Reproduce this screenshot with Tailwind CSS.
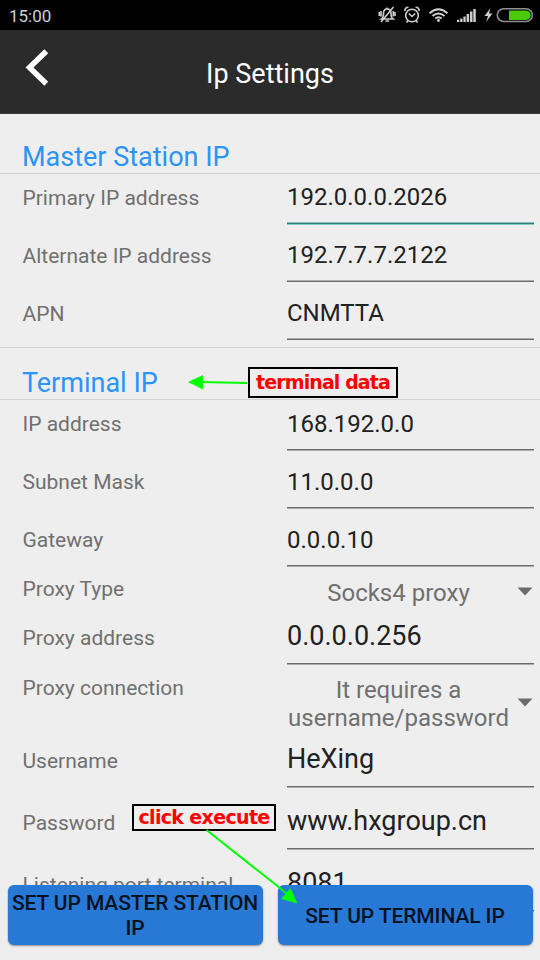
<!DOCTYPE html>
<html lang="en">
<head>
<meta charset="utf-8">
<title>Ip Settings</title>
<script src="https://cdn.jsdelivr.net/npm/@tailwindcss/browser@4"></script>
</head>
<body class="bg-[#eeeeee]">
<div class="relative w-[540px] h-[960px] overflow-hidden bg-[#eeeeee] font-[Roboto,sans-serif] text-[#212121]">
  <!-- status bar -->
  <div class="h-[30px] bg-black flex items-center justify-between pl-[9px] pr-[6px] text-[#cfcfcf]">
    <span class="text-[17px] leading-[30px] pt-[1px]">15:00</span>
    <svg class="w-[162px] h-[30px]" viewBox="372 0 162 30" fill="none" stroke="#cfcfcf" stroke-width="1.6">
      <path d="M381.500 19c1.500-1 2-3 2-5.500 0-3 1.200-4.500 3.500-4.500s4 1.500 4 4.500c0 2.500 .5 4.500 2 5.500z"/>
      <path d="M387 7.500v1.500M385.500 21h3.500M379.300 12v4M381 11v5.500M395 12v4M393.300 11v5.500M393.500 7L381 22"/>
      <circle cx="412" cy="15.500" r="6.300"/>
      <path d="M408.800 13.500l3.200 3 3.200-3M404.800 11c0-2 1.500-3.700 3.700-3.700M419.200 11c0-2-1.500-3.700-3.700-3.700M408 20.500l-1.500 2M416 20.500l1.500 2"/>
      <path d="M429.500 13.200q9-8 18 0M432.500 16q6-5.200 12 0M435.300 18.500q3.200-2.600 6.400 0" stroke-width="1.900"/>
      <circle cx="438.500" cy="20.500" r="1.400" fill="#cfcfcf" stroke="none"/>
      <path d="M457 22v-2.300h2.300V22zM460.200 22v-3.500h2.300V22zM463.400 22v-5.500h2.300V22zM466.600 22v-8h2.500V22zM470 22V11.500h2.500V22zM473.300 22V9h2.500V22z" fill="#cfcfcf" stroke="none"/>
      <path d="M490.500 8l-6 8h3.500l-2 6 6.500-8.500H489z" fill="#cfcfcf" stroke="none"/>
      <rect x="497.300" y="8.800" width="35" height="12.700" rx="6.300" stroke="#8f8f8f"/>
      <path d="M509 10.500h17a4.700 4.700 0 0 1 0 9.400h-17z" fill="#4bc80a" stroke="none"/>
    </svg>
  </div>
  <!-- title bar -->
  <div class="relative h-[84px] bg-[#2b2b2b] border-b border-[#3c3c3c] flex items-center justify-center text-white text-[27px] leading-[32px] pt-[4px]">
    <svg class="absolute left-[24px] top-[18px] w-[28px] h-[40px]" viewBox="0 0 28 40" fill="none" stroke="#fff" stroke-width="5.500"><path d="M22.300 3.300L5.500 19.500L22.300 35.700"/></svg>
    Ip Settings
  </div>

  <!-- master station -->
  <div class="h-[60px] border-b border-[#d2d2d2] pl-[22px] pt-[28px] text-[27px] leading-[30px] text-[#2b95f7]">Master Station IP</div>
  <div class="text-[21px] leading-[30px] text-[#707070]">
    <div class="h-[58px] flex pl-[22.5px]">
      <div class="w-[264.5px] pt-[9px]">Primary IP address</div>
      <div class="w-[247px]"><div class="h-[48px] pt-[8px] text-[24px] text-[#212121]">192.0.0.0.2026</div><div class="h-[3px] border-y border-t-[#8fbab5] border-b-[#80cbc4]"><div class="h-px bg-[#2f8179]"></div></div></div>
    </div>
    <div class="h-[58px] flex pl-[22.5px]">
      <div class="w-[264.5px] pt-[9px]">Alternate IP address</div>
      <div class="w-[247px]"><div class="h-[48px] pt-[8px] text-[24px] text-[#212121]">192.7.7.7.2122</div><div class="h-[2px] bg-[#6b6b6b] border-t border-[#adadad]"></div></div>
    </div>
    <div class="h-[58px] flex pl-[22.5px] border-b border-[#d2d2d2]">
      <div class="w-[264.5px] pt-[9px]">APN</div>
      <div class="w-[247px]"><div class="h-[48px] pt-[8px] text-[24px] text-[#212121]">CNMTTA</div><div class="h-[2px] bg-[#6b6b6b] border-t border-[#adadad]"></div></div>
    </div>
  </div>

  <!-- terminal -->
  <div class="h-[52px] border-b border-[#d2d2d2] pl-[22px] pt-[20px] text-[27px] leading-[30px] text-[#2b95f7]">Terminal IP</div>
  <div class="text-[21px] leading-[30px] text-[#707070]">
    <div class="h-[58px] flex pl-[22.5px]">
      <div class="w-[264.5px] pt-[9px]">IP address</div>
      <div class="w-[247px]"><div class="h-[49px] pt-[9px] text-[24px] text-[#212121]">168.192.0.0</div><div class="h-[2px] bg-[#6b6b6b] border-b border-[#adadad]"></div></div>
    </div>
    <div class="h-[58px] flex pl-[22.5px]">
      <div class="w-[264.5px] pt-[9px]">Subnet Mask</div>
      <div class="w-[247px]"><div class="h-[49px] pt-[9px] text-[24px] text-[#212121]">11.0.0.0</div><div class="h-[2px] bg-[#6b6b6b] border-b border-[#adadad]"></div></div>
    </div>
    <div class="h-[58px] flex pl-[22.5px]">
      <div class="w-[264.5px] pt-[9px]">Gateway</div>
      <div class="w-[247px]"><div class="h-[49px] pt-[9px] text-[24px] text-[#212121]">0.0.0.10</div><div class="h-[2px] bg-[#6b6b6b] border-b border-[#adadad]"></div></div>
    </div>
    <div class="h-[38px] flex pl-[22.5px]">
      <div class="w-[264.5px]">Proxy Type</div>
      <div class="w-[223px] pt-[5px] text-[24px] leading-[28px] text-center">Socks4 proxy</div>
      <svg class="ml-[7px] mt-[13px] w-[16px] h-[9px]" viewBox="0 0 16 9"><path d="M.5.500h15L8 8.500z" fill="#6b6b6b"/></svg>
    </div>
    <div class="h-[61px] flex pl-[22.5px]">
      <div class="w-[264.5px] pt-[11px]">Proxy address</div>
      <div class="w-[247px]"><div class="h-[51px] pt-[9px] text-[27px] text-[#212121]">0.0.0.0.256</div><div class="h-[2px] bg-[#6b6b6b] border-b border-[#adadad]"></div></div>
    </div>
    <div class="h-[62px] flex pl-[22.5px]">
      <div class="w-[264.5px]">Proxy connection</div>
      <div class="w-[223px] pt-[3px] text-[24px] leading-[28px] text-center">It requires a<br>username/password</div>
      <svg class="ml-[7px] mt-[25px] w-[16px] h-[9px]" viewBox="0 0 16 9"><path d="M.5.500h15L8 8.500z" fill="#6b6b6b"/></svg>
    </div>
    <div class="h-[62px] flex pl-[22.5px]">
      <div class="w-[264.5px] pt-[11px]">Username</div>
      <div class="w-[247px]"><div class="h-[51px] pt-[9px] text-[27px] text-[#212121]">HeXing</div><div class="h-[2px] bg-[#6b6b6b] border-b border-[#adadad]"></div></div>
    </div>
    <div class="h-[62px] flex pl-[22.5px]">
      <div class="w-[264.5px] pt-[11px]">Password</div>
      <div class="w-[247px]"><div class="h-[51px] pt-[9px] text-[27px] text-[#212121]">www.hxgroup.cn</div><div class="h-[2px] bg-[#6b6b6b] border-b border-[#adadad]"></div></div>
    </div>
    <div class="h-[62px] flex pl-[22.5px]">
      <div class="w-[264.5px] pt-[11px]">Listening port terminal</div>
      <div class="w-[247px]"><div class="h-[51px] pt-[9px] text-[27px] text-[#212121]">8081</div><div class="h-[2px] bg-[#6b6b6b] border-b border-[#adadad]"></div></div>
    </div>
  </div>

  <!-- floating action buttons -->
  <div class="absolute left-0 top-[885px] w-full flex gap-[15px] pl-[7.5px] text-[21px] leading-[25px] font-medium text-[#06121f] text-center tracking-[-0.1px]">
    <div class="w-[255px] h-[60px] pt-[2px] rounded-[6px] bg-[#2878d5] shadow-[0_1px_2px_rgba(0,0,0,0.4)] flex items-center justify-center">SET UP MASTER STATION<br>IP</div>
    <div class="w-[255px] h-[60px] pt-[2px] rounded-[6px] bg-[#2878d5] shadow-[0_1px_2px_rgba(0,0,0,0.4)] flex items-center justify-center">SET UP TERMINAL IP</div>
  </div>

  <!-- annotations -->
  <div class="absolute left-[248px] top-[367px] w-[150px] h-[31px] border-2 border-black bg-[#eeeeee] flex items-center justify-center font-['DejaVu_Sans',sans-serif] font-bold text-[19px] tracking-[-0.9px] text-[#ff0000] whitespace-nowrap">terminal data</div>
  <div class="absolute left-[132px] top-[804px] w-[144px] h-[27px] border-2 border-black bg-[#eeeeee] flex items-center justify-center font-['DejaVu_Sans',sans-serif] font-bold text-[19px] tracking-[-0.65px] text-[#ff0000] whitespace-nowrap">click execute</div>
  <svg class="absolute left-0 top-0 w-[540px] h-[960px]" viewBox="0 0 540 960" stroke="#00ff00" stroke-width="2" fill="#00ff00">
    <path d="M247 383L200 382M206.500 830L290 896"/>
    <path d="M188 382L203 375V389.500zM297.500 903.500L290.500 888L281 899z" stroke="none"/>
  </svg>
</div>
</body>
</html>
